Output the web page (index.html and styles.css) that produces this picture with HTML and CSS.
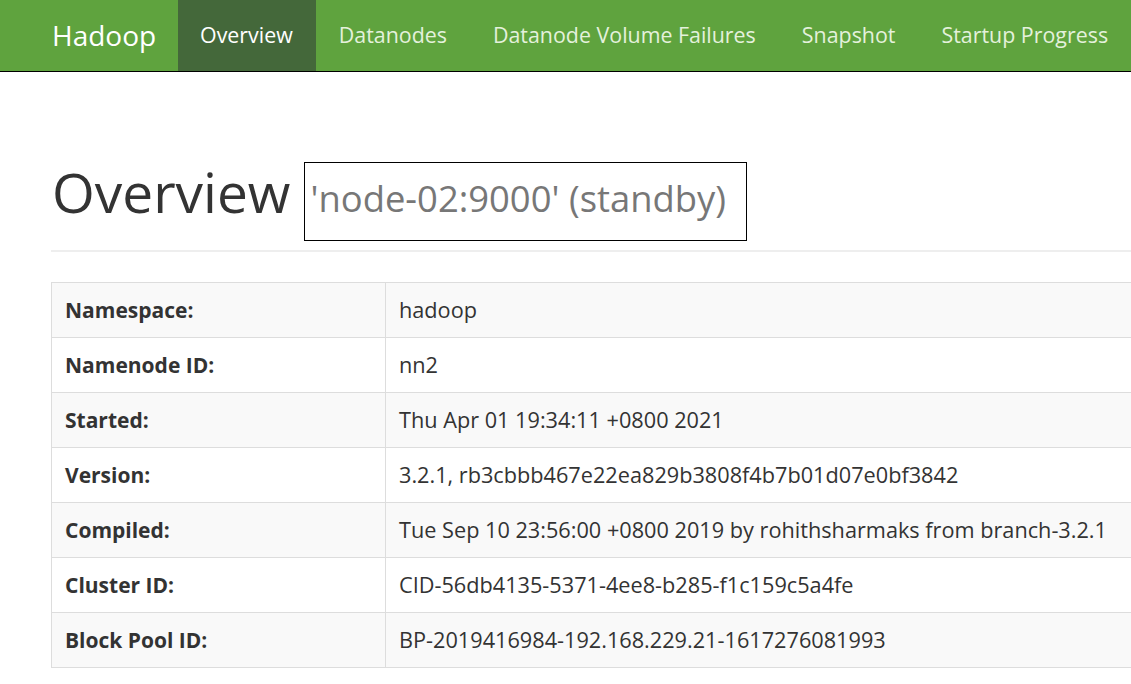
FILE: index.html
```html
<!DOCTYPE html>
<html>
<head>
<meta charset="utf-8">
<title>Namenode information</title>
<link rel="stylesheet" href="styles.css">
</head>
<body>
<header class="navbar">
  <div class="nav-inner">
    <a class="brand" href="#">Hadoop</a>
    <ul class="nav">
      <li class="active"><a href="#">Overview</a></li>
      <li><a href="#">Datanodes</a></li>
      <li><a href="#">Datanode Volume Failures</a></li>
      <li><a href="#">Snapshot</a></li>
      <li><a href="#">Startup Progress</a></li>
    </ul>
  </div>
</header>
<main class="container">
  <div class="page-header">
    <h1><span class="title">Overview</span> <small class="boxed">'node-02:9000' (standby)</small></h1>
  </div>
  <table class="info">
    <tr><th>Namespace:</th><td>hadoop</td></tr>
    <tr><th>Namenode ID:</th><td>nn2</td></tr>
    <tr><th>Started:</th><td>Thu Apr 01 19:34:11 +0800 2021</td></tr>
    <tr><th>Version:</th><td>3.2.1, rb3cbbb467e22ea829b3808f4b7b01d07e0bf3842</td></tr>
    <tr><th>Compiled:</th><td>Tue Sep 10 23:56:00 +0800 2019 by rohithsharmaks from branch-3.2.1</td></tr>
    <tr><th>Cluster ID:</th><td>CID-56db4135-5371-4ee8-b285-f1c159c5a4fe</td></tr>
    <tr><th>Block Pool ID:</th><td>BP-2019416984-192.168.229.21-1617276081993</td></tr>
  </table>
</main>
</body>
</html>
```
FILE: styles.css
```css
html, body {
  margin: 0;
  padding: 0;
  overflow: hidden;
  background: #fff;
}
body {
  font-family: "Open Sans", "Noto Sans CJK SC", sans-serif;
  color: #333;
  font-size: 21px;
  width: 1131px;
}
.navbar {
  background: #5fa33e;
  height: 71px;
  border-bottom: 1px solid #000;
}
.nav-inner {
  display: flex;
  height: 71px;
  padding-left: 52px;
}
.brand {
  flex-shrink: 0;
  color: #fff;
  text-decoration: none;
  font-size: 28px;
  line-height: 70px;
  width: 126px;
  white-space: nowrap;
}
.nav {
  display: flex;
  flex-shrink: 0;
  list-style: none;
  margin: 0;
  padding: 0;
}
.nav li {
  flex-shrink: 0;
}
.nav li a {
  display: block;
  padding: 0 23px;
  line-height: 69px;
  height: 71px;
  font-size: 21.4px;
  color: #e4f1dc;
  text-decoration: none;
  white-space: nowrap;
}
.nav li.active a {
  background: #44683a;
  color: #fff;
  padding: 0 23px 0 22px;
}
.container {
  padding: 0 0 0 51px;
}
.page-header {
  margin-top: 90px;
  border-bottom: 2px solid #eee;
  padding-bottom: 9px;
  white-space: nowrap;
}
h1 {
  margin: 0;
  font-weight: 400;
  display: flex;
  align-items: flex-end;
  gap: 14px;
}
h1 .title {
  font-size: 55px;
  line-height: 60px;
  margin-bottom: 19px;
  padding-left: 1px;
}
h1 .boxed {
  font-size: 36.4px;
  color: #777;
  border: 1px solid #000;
  line-height: 71px;
  padding: 0 20px 6px 5px;
  display: inline-block;
}
table.info {
  margin-top: 30px;
  border-collapse: collapse;
  width: 1150px;
}
table.info th, table.info td {
  border: 1px solid #ddd;
  text-align: left;
  padding: 12px 12px 12px 13px;
  line-height: 30px;
  white-space: nowrap;
}
table.info th {
  width: 308px;
  font-weight: 700;
  font-size: 21px;
}
table.info td {
  font-size: 21.7px;
}
table.info tr:nth-child(odd) {
  background: #f9f9f9;
}
```
